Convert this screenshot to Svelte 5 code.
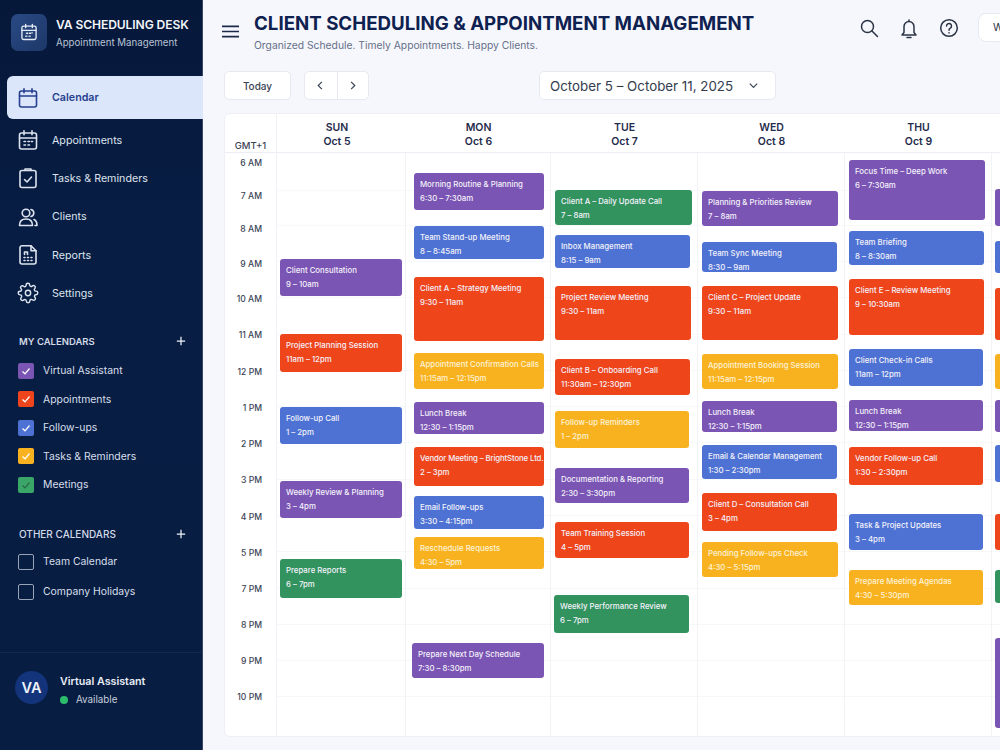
<script>
	const nav = [
		{ label: 'Calendar', icon: 'cal', active: true },
		{ label: 'Appointments', icon: 'appt' },
		{ label: 'Tasks & Reminders', icon: 'task' },
		{ label: 'Clients', icon: 'clients' },
		{ label: 'Reports', icon: 'report' },
		{ label: 'Settings', icon: 'gear' }
	];

	const myCalendars = [
		{ label: 'Virtual Assistant', color: '#7b55b3' },
		{ label: 'Appointments', color: '#ee451c' },
		{ label: 'Follow-ups', color: '#4e72d3' },
		{ label: 'Tasks & Reminders', color: '#f9b21f' },
		{ label: 'Meetings', color: '#3aa768', dark: true }
	];

	const otherCalendars = ['Team Calendar', 'Company Holidays'];

	// the reference's hour rows are not evenly spaced, so each label keeps its own y
	const hours = [
		['6 AM', 162], ['7 AM', 195], ['8 AM', 228], ['9 AM', 263], ['10 AM', 298], ['11 AM', 334],
		['12 PM', 371], ['1 PM', 407], ['2 PM', 443], ['3 PM', 479], ['4 PM', 516], ['5 PM', 552],
		['7 PM', 588], ['8 PM', 624], ['9 PM', 660], ['10 PM', 696]
	];
	const hourLines = [190, 225, 261, 297, 334, 370, 406, 442, 479, 515, 551, 588, 624, 660, 696];

	const GRID_TOP = 153;

	// top and bottom are page y values read off the reference
	const days = [
		{
			name: 'SUN', date: 'Oct 5', left: 3, events: [
				['Client Consultation', '9 – 10am', 'purple', 259, 296, 122],
				['Project Planning Session', '11am – 12pm', 'red', 334, 372, 122],
				['Follow-up Call', '1 – 2pm', 'blue', 407, 444, 122],
				['Weekly Review & Planning', '3 – 4pm', 'purple', 481, 518, 122],
				['Prepare Reports', '6 – 7pm', 'green', 559, 598, 122]
			]
		},
		{
			name: 'MON', date: 'Oct 6', left: 8, events: [
				['Morning Routine & Planning', '6:30 – 7:30am', 'purple', 173, 210, 130],
				['Team Stand-up Meeting', '8 – 8:45am', 'blue', 226, 259, 130],
				['Client A – Strategy Meeting', '9:30 – 11am', 'red', 277, 341, 130],
				['Appointment Confirmation Calls', '11:15am – 12:15pm', 'yellow', 353, 389, 130],
				['Lunch Break', '12:30 – 1:15pm', 'purple', 402, 434, 130],
				['Vendor Meeting – BrightStone Ltd.', '2 – 3pm', 'red', 447, 486, 130],
				['Email Follow-ups', '3:30 – 4:15pm', 'blue', 496, 529, 130],
				['Reschedule Requests', '4:30 – 5pm', 'yellow', 537, 569, 130],
				['Prepare Next Day Schedule', '7:30 – 8:30pm', 'purple', 643, 678, 132, 6]
			]
		},
		{
			name: 'TUE', date: 'Oct 7', left: 4, events: [
				['Client A – Daily Update Call', '7 – 8am', 'green', 190, 225, 137],
				['Inbox Management', '8:15 – 9am', 'blue', 235, 268, 135],
				['Project Review Meeting', '9:30 – 11am', 'red', 286, 340, 136],
				['Client B – Onboarding Call', '11:30am – 12:30pm', 'red', 359, 395, 135],
				['Follow-up Reminders', '1 – 2pm', 'yellow', 411, 448, 134],
				['Documentation & Reporting', '2:30 – 3:30pm', 'purple', 468, 503, 134],
				['Team Training Session', '4 – 5pm', 'red', 522, 558, 134],
				['Weekly Performance Review', '6 – 7pm', 'green', 595, 633, 135, 3]
			]
		},
		{
			name: 'WED', date: 'Oct 8', left: 4, events: [
				['Planning & Priorities Review', '7 – 8am', 'purple', 191, 226, 136],
				['Team Sync Meeting', '8:30 – 9am', 'blue', 242, 272, 135],
				['Client C – Project Update', '9:30 – 11am', 'red', 286, 340, 136],
				['Appointment Booking Session', '11:15am – 12:15pm', 'yellow', 354, 389, 136],
				['Lunch Break', '12:30 – 1:15pm', 'purple', 401, 432, 135],
				['Email & Calendar Management', '1:30 – 2:30pm', 'blue', 445, 479, 135],
				['Client D – Consultation Call', '3 – 4pm', 'red', 493, 531, 135],
				['Pending Follow-ups Check', '4:30 – 5:15pm', 'yellow', 542, 577, 136]
			]
		},
		{
			name: 'THU', date: 'Oct 9', left: 4, events: [
				['Focus Time – Deep Work', '6 – 7:30am', 'purple', 160, 220, 136],
				['Team Briefing', '8 – 8:30am', 'blue', 231, 265, 135],
				['Client E – Review Meeting', '9 – 10:30am', 'red', 279, 335, 135],
				['Client Check-in Calls', '11am – 12pm', 'blue', 349, 386, 134],
				['Lunch Break', '12:30 – 1:15pm', 'purple', 400, 431, 134],
				['Vendor Follow-up Call', '1:30 – 2:30pm', 'red', 447, 485, 134],
				['Task & Project Updates', '3 – 4pm', 'blue', 514, 550, 134],
				['Prepare Meeting Agendas', '4:30 – 5:30pm', 'yellow', 570, 605, 134]
			]
		},
		{
			// only a sliver of this column shows, so its events carry no text
			left: 3, events: [
				['', '', 'purple', 189, 226, 136],
				['', '', 'blue', 241, 273, 136],
				['', '', 'red', 288, 340, 136],
				['', '', 'yellow', 354, 389, 136],
				['', '', 'purple', 400, 432, 136],
				['', '', 'blue', 445, 482, 136],
				['', '', 'red', 514, 550, 136],
				['', '', 'green', 570, 603, 136],
				['', '', 'purple', 638, 728, 136]
			]
		}
	];

	function timeRowHeight(i) {
		return i < hours.length - 1 ? hours[i + 1][1] - hours[i][1] : 36;
	}
</script>

{#snippet icon(name)}
	<svg class="nav-icon" viewBox={name === 'gear' ? '-1.5 -1.5 27 27' : '0 0 24 24'} fill="none" stroke="currentColor" stroke-width="1.6" stroke-linecap="round" stroke-linejoin="round">
		{#if name === 'cal'}
			<rect x="3.5" y="5" width="17" height="16" rx="2" />
			<path d="M3.5 10h17M8 2.8v4M16 2.8v4" />
		{:else if name === 'appt'}
			<rect x="3.5" y="5" width="17" height="16" rx="2" />
			<path d="M3.5 10h17M8 2.8v4M16 2.8v4M8 13.5h1.5M12 13.5h1.5M15.5 13.5h1M8 17h1.5M12 17h1.5" />
		{:else if name === 'task'}
			<rect x="4" y="4.5" width="16" height="17" rx="2" />
			<path d="M9 4.5V3h6v1.5M8.5 13.5l2.5 2.5 4.5-5" />
		{:else if name === 'clients'}
			<circle cx="10" cy="8" r="3.8" />
			<path d="M3.5 20.5c0-4 2.5-6.5 6.5-6.5s6.5 2.5 6.5 6.5zM15 4.5c1.8.5 2.8 1.8 2.8 3.5s-1 3-2.8 3.5M18 14.5c1.8.8 3 2.8 3 6h-2" />
		{:else if name === 'report'}
			<path d="M6 2.8h9l5 5V19a2 2 0 0 1-2 2H6a2 2 0 0 1-2-2V4.8a2 2 0 0 1 2-2z" />
			<path d="M15 2.8v5h5M8 17.5h1M11.5 17.5h1M15 17.5h1M8 14.5h1M11.5 14.5h1M15 14.5h1M8.5 11.5V9h3v2.5" />
		{:else}
			<circle cx="12" cy="12" r="3" />
			<path d="M19.4 15a1.65 1.65 0 0 0 .33 1.82l.06.06a2 2 0 1 1-2.83 2.83l-.06-.06a1.65 1.65 0 0 0-2.8 1.17V21a2 2 0 0 1-4 0v-.09a1.65 1.65 0 0 0-2.8-1.17l-.06.06a2 2 0 1 1-2.83-2.83l.06-.06a1.65 1.65 0 0 0-1.17-2.8H3a2 2 0 0 1 0-4h.09a1.65 1.65 0 0 0 1.17-2.8l-.06-.06a2 2 0 1 1 2.83-2.83l.06.06a1.65 1.65 0 0 0 2.8-1.17V3a2 2 0 0 1 4 0v.09a1.65 1.65 0 0 0 2.8 1.17l.06-.06a2 2 0 1 1 2.83 2.83l-.06.06a1.65 1.65 0 0 0 1.17 2.8H21a2 2 0 0 1 0 4h-.09a1.65 1.65 0 0 0-1.51 1z" />
		{/if}
	</svg>
{/snippet}

<div class="app">
	<aside class="sidebar">
		<div class="brand">
			<div class="logo">
				<svg viewBox="0 0 24 24" fill="none" stroke="currentColor" stroke-width="1.6" stroke-linecap="round" stroke-linejoin="round">
					<rect x="3.5" y="5" width="17" height="16" rx="2" />
					<path d="M3.5 10h17M8 2.8v4M16 2.8v4M9 13.5h1.5M12.5 13.5h1.5M15.5 13h.5M8 17h1.5M12 17h1.5" />
				</svg>
			</div>
			<div>
				<div class="brand-name">VA SCHEDULING DESK</div>
				<div class="brand-sub">Appointment Management</div>
			</div>
		</div>

		<nav>
			{#each nav as item}
				<a class="nav-item" class:active={item.active} href="#{item.icon}">
					{@render icon(item.icon)}
					<span>{item.label}</span>
				</a>
			{/each}
		</nav>

		<section class="cal-group mine">
			<div class="group-title">
				<span>MY CALENDARS</span>
				<svg viewBox="0 0 12 12"><path d="M6 1v10M1 6h10" /></svg>
			</div>
			{#each myCalendars as cal}
				<label class="cal-row">
					<span class="check" style="background: {cal.color}">
						<svg viewBox="0 0 12 12" class:dark={cal.dark}><path d="M2.5 6.5l2.5 2.3 4.5-5.3" /></svg>
					</span>
					{cal.label}
				</label>
			{/each}
		</section>

		<section class="cal-group other">
			<div class="group-title">
				<span>OTHER CALENDARS</span>
				<svg viewBox="0 0 12 12"><path d="M6 1v10M1 6h10" /></svg>
			</div>
			{#each otherCalendars as label}
				<label class="cal-row tall">
					<span class="check empty"></span>
					{label}
				</label>
			{/each}
		</section>

		<div class="user">
			<div class="avatar">VA</div>
			<div>
				<div class="user-name">Virtual Assistant</div>
				<div class="user-status"><i></i>Available</div>
			</div>
		</div>
	</aside>

	<main>
		<header class="topbar">
			<svg class="menu" viewBox="0 0 18 14" preserveAspectRatio="none"><path d="M0 1.5h18M0 7h18M0 12.5h18" /></svg>
			<div class="titles">
				<h1>CLIENT SCHEDULING &amp; APPOINTMENT MANAGEMENT</h1>
				<p>Organized Schedule. Timely Appointments. Happy Clients.</p>
			</div>
			<div class="actions">
				<svg viewBox="0 0 24 24"><circle cx="10.5" cy="10.5" r="6" /><path d="M15 15l5.5 5.5" /></svg>
				<svg viewBox="0 0 24 24"><path d="M7 16.5V10.5a5 5 0 0 1 10 0V16.5l2 2.5H5zM10 21.5h4M12 5.5V4" /></svg>
				<svg viewBox="0 0 24 24"><circle cx="12" cy="12" r="8.3" /><path d="M9.5 10a2.5 2.5 0 1 1 3.8 2.1c-.9.6-1.3 1-1.3 2.1M12 16.8v.1" /></svg>
				<button class="week">Week</button>
			</div>
		</header>

		<div class="toolbar">
			<button class="today">Today</button>
			<div class="pager">
				<button aria-label="Previous"><svg viewBox="0 0 12 12"><path d="M7.5 2L3.5 6l4 4" /></svg></button>
				<button aria-label="Next"><svg viewBox="0 0 12 12"><path d="M4.5 2l4 4-4 4" /></svg></button>
			</div>
			<button class="range">
				October 5 – October 11, 2025
				<svg viewBox="0 0 12 12"><path d="M2 4l4 4 4-4" /></svg>
			</button>
		</div>

		<div class="calendar">
			<div class="head-row">
				<div class="gmt">GMT+1</div>
				{#each days as day}
					<div class="day-head"><b>{day.name}</b><b>{day.date}</b></div>
				{/each}
			</div>
			<div class="body-row">
				<div class="times">
					{#each hours as [label], i}
						<div class="time" style="height: {timeRowHeight(i)}px">{label}</div>
					{/each}
				</div>
				{#each hourLines as y}
					<div class="hour-line" style="top: {y - GRID_TOP}px"></div>
				{/each}
				{#each days as day}
					<div class="day-col">
						{#each day.events as [title, time, color, top, bottom, width, left]}
							<div
								class="event {color}"
								class:long={title.length > 32}
								style="top: {top - GRID_TOP}px; height: {bottom - top}px; left: {left ?? day.left}px; width: {width}px"
							>
								<div class="event-title">{title}</div>
								<div>{time}</div>
							</div>
						{/each}
					</div>
				{/each}
			</div>
		</div>
	</main>
</div>

<style>
	:global(body) {
		font-family: Inter, 'Liberation Sans', sans-serif;
		background: #f6f7fc;
	}

	.app {
		display: flex;
		width: 1000px;
		height: 750px;
		overflow: hidden;
	}

	.sidebar {
		flex: 0 0 203px;
		box-sizing: border-box;
		display: flex;
		flex-direction: column;
		background: linear-gradient(#06183a, #071d43 30%, #071d41);
		color: #e3e8f2;
		border-right: 1px solid #39486a;
	}

	.brand {
		display: flex;
		align-items: center;
		gap: 9px;
		padding: 13px 0 0 11px;
		height: 38px;
	}

	.logo {
		width: 36px;
		height: 37px;
		border-radius: 7px;
		background: linear-gradient(135deg, #2a4a85, #1d3768);
		display: flex;
		align-items: center;
		justify-content: center;
		color: #e6ecf8;
	}

	.logo svg {
		width: 20px;
		height: 20px;
	}

	.brand-name {
		font-size: 12.1px;
		font-weight: 600;
		color: #f3f5fa;
		white-space: nowrap;
		letter-spacing: -0.1px;
	}

	.brand-sub {
		font-size: 9.7px;
		margin-top: 5px;
		color: #b9c3d6;
		white-space: nowrap;
	}

	nav {
		display: flex;
		flex-direction: column;
		margin-top: 25px;
		padding-left: 7px;
	}

	.nav-item {
		display: flex;
		align-items: center;
		gap: 12px;
		height: 38.3px;
		padding-left: 9px;
		color: #dde3ee;
		font-size: 10.7px;
		text-decoration: none;
	}

	.nav-item.active {
		height: 43px;
		margin-bottom: 2px;
		margin-right: -1px;
		background: #dbe6fb;
		color: #263f8e;
		font-weight: 600;
		border-radius: 6px 0 0 6px;
	}

	.nav-icon {
		width: 24px;
		height: 24px;
		flex: none;
	}

	.cal-group {
		padding: 0 16px 0 19px;
		font-size: 10.4px;
	}

	.cal-group.mine {
		margin-top: 19px;
	}

	.cal-group.other {
		margin-top: 25px;
	}

	.group-title {
		display: flex;
		justify-content: space-between;
		align-items: center;
		height: 20px;
		font-size: 9.5px;
		font-weight: 600;
		color: #d3dae7;
	}

	.mine .group-title {
		margin-bottom: 5px;
	}

	.other .group-title {
		margin-bottom: 3px;
		font-size: 10px;
		font-weight: 500;
	}

	.group-title svg {
		width: 10px;
		height: 10px;
		fill: none;
		stroke: #f0f3f9;
		stroke-width: 1.5;
	}

	.cal-row {
		display: flex;
		align-items: center;
		gap: 9px;
		height: 28.5px;
		color: #d8dfeb;
	}

	.cal-row.tall {
		height: 30px;
	}

	.check {
		width: 16px;
		height: 16px;
		margin-left: -1px;
		border-radius: 2px;
		display: flex;
		align-items: center;
		justify-content: center;
	}

	.check svg {
		width: 12px;
		height: 12px;
		fill: none;
		stroke: #fff;
		stroke-width: 1.2;
	}

	.check svg.dark {
		stroke: #2c6a48;
	}

	.check.empty {
		box-sizing: border-box;
		border: 1px solid #98a3b8;
	}

	.user {
		margin-top: auto;
		height: 98px;
		box-sizing: border-box;
		border-top: 1px solid #14284c;
		padding: 18px 0 0 15px;
		display: flex;
		align-items: flex-start;
		gap: 12px;
	}

	.avatar {
		width: 33px;
		height: 33px;
		border-radius: 50%;
		background: #13337a;
		color: #eef2fa;
		font-size: 14.5px;
		font-weight: 600;
		display: flex;
		align-items: center;
		justify-content: center;
	}

	.user-name {
		font-size: 10.7px;
		font-weight: 600;
		color: #e9edf5;
		margin-top: 4px;
	}

	.user-status {
		display: flex;
		align-items: center;
		gap: 8px;
		margin-top: 6px;
		font-size: 9.8px;
		color: #c6cedd;
	}

	.user-status i {
		width: 8px;
		height: 8px;
		border-radius: 50%;
		background: #2cbd6c;
	}

	main {
		flex: 1;
		min-width: 0;
		padding: 0 0 14px 21px;
		overflow: hidden;
	}

	.topbar {
		display: flex;
		align-items: flex-start;
		height: 71px;
	}

	.menu {
		flex: none;
		width: 17px;
		height: 13px;
		margin: 25px 0 0 -2px;
		fill: none;
		stroke: #1a2a48;
		stroke-width: 1.8;
	}

	.titles {
		margin-left: 15px;
		width: 603px;
		flex: none;
	}

	h1 {
		margin: 13px 0 0;
		font-size: 18.7px;
		line-height: 22px;
		font-weight: 700;
		color: #0e2150;
		white-space: nowrap;
	}

	.titles p {
		margin: 4px 0 0;
		font-size: 10.3px;
		color: #667089;
	}

	.actions {
		display: flex;
		align-items: center;
		gap: 16px;
		margin-top: 13px;
	}

	.actions svg {
		flex: none;
		width: 24px;
		height: 24px;
		fill: none;
		stroke: #2b3446;
		stroke-width: 1.5;
		stroke-linecap: round;
		stroke-linejoin: round;
	}

	button {
		font-family: inherit;
		background: #fff;
		border: 1px solid #e7e9f1;
		border-radius: 5px;
		box-sizing: border-box;
	}

	.week {
		height: 29px;
		width: 60px;
		margin-left: 1px;
		text-align: left;
		padding-left: 14px;
		font-size: 10.5px;
		color: #2b3446;
		flex: none;
		border-radius: 8px;
	}

	.toolbar {
		display: flex;
		align-items: center;
		height: 29px;
	}

	.today {
		width: 67px;
		height: 29px;
		font-size: 10px;
		font-weight: 500;
		color: #3b4456;
	}

	.pager {
		display: flex;
		margin-left: 13px;
		background: #fff;
		border: 1px solid #e7e9f1;
		border-radius: 5px;
		height: 29px;
		box-sizing: border-box;
	}

	.pager button {
		width: 31.5px;
		border: 0;
		border-radius: 0;
		background: none;
		display: flex;
		align-items: center;
		justify-content: center;
		padding: 0;
	}

	.pager button + button {
		border-left: 1px solid #e7e9f1;
	}

	.pager svg,
	.range svg {
		width: 11px;
		height: 11px;
		fill: none;
		stroke: #3b4456;
		stroke-width: 1.3;
	}

	.range {
		margin-left: 170px;
		width: 237px;
		height: 29px;
		display: flex;
		align-items: center;
		justify-content: space-between;
		padding: 0 16px 0 10px;
		font-size: 13.35px;
		color: #333c4e;
	}

	.calendar {
		margin-top: 13px;
		width: 900px;
		height: 624px;
		background: #fff;
		border: 1px solid #eef0f6;
		border-radius: 6px;
		box-sizing: border-box;
		overflow: hidden;
	}

	.head-row,
	.body-row {
		display: grid;
		grid-template-columns: 52px 129px 145px 147px 147px 147px 147px;
	}

	.head-row {
		height: 38px;
		border-bottom: 1px solid #eceef4;
	}

	.gmt {
		border-right: 1px solid #f0f1f6;
		display: flex;
		align-items: flex-end;
		justify-content: center;
		padding-bottom: 1px;
		font-size: 9.5px;
		font-weight: 500;
		color: #3b4456;
	}

	.day-head {
		display: flex;
		flex-direction: column;
		align-items: center;
		justify-content: flex-end;
		gap: 1px;
		padding-bottom: 4px;
		font-size: 10.5px;
		color: #1f2c4c;
	}

	.day-head:nth-child(2) {
		padding-right: 9px;
	}

	.day-head b {
		font-weight: 600;
	}

	.body-row {
		position: relative;
		height: 584px;
	}

	.times {
		border-right: 1px solid #f0f1f6;
		padding-top: 5px;
		display: flex;
		flex-direction: column;
	}

	.time {
		flex: none;
		text-align: right;
		padding-right: 14px;
		font-size: 8.6px;
		font-weight: 500;
		color: #3b4456;
	}

	.hour-line {
		position: absolute;
		left: 52px;
		right: 0;
		border-top: 1px solid #f7f8fa;
	}

	.day-col {
		position: relative;
		border-right: 1px solid #f2f3f7;
	}

	.event {
		position: absolute;
		box-sizing: border-box;
		padding: 5px 6px 0;
		border-radius: 3px;
		color: #f4f2fb;
		font-size: 7.8px;
		line-height: 13.7px;
		white-space: nowrap;
		overflow: hidden;
		font-weight: 500;
	}

	.event.long .event-title {
		letter-spacing: -0.12px;
	}

	.purple {
		background: #7b55b3;
	}

	.red {
		background: #ee451b;
	}

	.blue {
		background: #4e72d3;
	}

	.yellow {
		background: #f9b21f;
		color: #fdf2d8;
	}

	.green {
		background: #32935f;
	}
</style>
